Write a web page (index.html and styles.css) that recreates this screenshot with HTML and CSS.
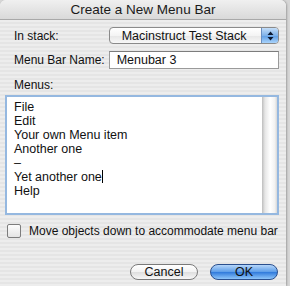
FILE: index.html
```html
<!DOCTYPE html>
<html lang="en">
<head>
    <meta charset="UTF-8">
    <title>Create a New Menu Bar</title>
    <link rel="stylesheet" href="styles.css">
</head>
<body>
    <div class="window">
        <div class="titlebar">Create a New Menu Bar</div>
        <div class="content">
            <div class="row stack-row">
                <span class="label">In stack:</span>
                <div class="popup">
                    <span class="popup-text">Macinstruct Test Stack</span>
                    <span class="popup-arrows">
                        <svg width="7" height="10" viewBox="0 0 7 10">
                            <path d="M3.5 0.5 L6.5 4 H0.5 Z M3.5 9.5 L6.5 6 H0.5 Z" fill="#0c1a33"/>
                        </svg>
                    </span>
                </div>
            </div>
            <div class="row name-row">
                <span class="label">Menu Bar Name:</span>
                <div class="field">Menubar 3</div>
            </div>
            <div class="menus-label">Menus:</div>
            <div class="menus-box">
                <div class="menus-text">
                    <div>File</div>
                    <div>Edit</div>
                    <div>Your own Menu item</div>
                    <div>Another one</div>
                    <div>–</div>
                    <div>Yet another one<span class="caret"></span></div>
                    <div>Help</div>
                </div>
                <div class="scroll-track"></div>
            </div>
            <label class="check-row">
                <span class="checkbox"></span>
                <span class="check-label">Move objects down to accommodate menu bar</span>
            </label>
            <div class="buttons">
                <button class="btn btn-cancel">Cancel</button>
                <button class="btn btn-ok">OK</button>
            </div>
        </div>
    </div>
</body>
</html>
```

FILE: styles.css
```css
body {
    margin: 0;
    width: 290px;
    height: 286px;
    overflow: hidden;
    background-color: #d6d6d6;
    font-family: 'Liberation Sans', Arial, sans-serif;
    font-size: 12px;
    color: #111;
}
.window {
    width: 286px;
    height: 286px;
    border-radius: 6px 6px 0 0;
    overflow: hidden;
    background: repeating-linear-gradient(#ededed 0, #ededed 2px, #e5e5e5 2px, #e5e5e5 4px);
    box-shadow: 1px 0 2px rgba(0, 0, 0, 0.25);
}
.titlebar {
    height: 19px;
    line-height: 19px;
    text-align: center;
    font-size: 13.5px;
    color: #1a1a1a;
    background: linear-gradient(#f0f0f0, #d9d9d9);
    border-bottom: 1px solid #a9a9a9;
}
.content {
    padding: 7px 7px 0 5px;
}
.row {
    display: flex;
    align-items: center;
}
.label {
    width: 95px;
    padding-left: 9px;
}
.popup {
    display: flex;
    align-items: center;
    width: 169px;
    height: 15px;
    border: 1px solid #8a8a8a;
    border-radius: 4px;
    background: linear-gradient(#ffffff, #f4f4f4 50%, #e6e6e6 51%, #f8f8f8);
    overflow: hidden;
}
.popup-text {
    flex: 1;
    padding-left: 12px;
    font-size: 12.5px;
}
.popup-arrows {
    width: 16px;
    height: 15px;
    display: flex;
    align-items: center;
    justify-content: center;
    border-left: 1px solid #6a8fc2;
    background: linear-gradient(#c3ddf8, #7fb2ea 50%, #5d9ce4 51%, #a9d3fb);
}
.name-row {
    margin-top: 7px;
}
.field {
    width: 162px;
    height: 16px;
    line-height: 16px;
    padding-left: 7px;
    font-size: 12.5px;
    background-color: #fff;
    border: 1px solid #9a9a9a;
    border-top-color: #7c7c7c;
}
.menus-label {
    margin-top: 9px;
    padding-left: 9px;
    height: 15px;
}
.menus-box {
    display: flex;
    width: 270px;
    height: 116px;
    margin-top: 2px;
    border: 2px solid #95b8e0;
    background-color: #fff;
}
.menus-text {
    flex: 1;
    padding: 3px 0 0 7px;
    line-height: 14px;
    font-size: 12.5px;
}
.caret {
    display: inline-block;
    width: 1px;
    height: 13px;
    background-color: #000;
    vertical-align: -2px;
}
.scroll-track {
    width: 15px;
    background: linear-gradient(to right, #bdbdbd, #e6e6e6 20%, #ffffff 55%, #f2f2f2 85%, #d7d7d7);
}
.check-row {
    display: flex;
    align-items: center;
    gap: 8px;
    margin-top: 9px;
    padding-left: 2px;
}
.check-label {
    font-size: 12px;
    white-space: nowrap;
}
.checkbox {
    width: 12px;
    height: 12px;
    flex-shrink: 0;
    border: 1px solid #7d7d7d;
    border-radius: 2px;
    background: linear-gradient(#fdfdfd, #e4e4e4);
}
.buttons {
    display: flex;
    justify-content: flex-end;
    gap: 12px;
    margin-top: 26px;
    padding-right: 1px;
}
.btn {
    width: 68px;
    height: 16px;
    padding: 0;
    border-radius: 8px;
    font-family: 'Liberation Sans', Arial, sans-serif;
    font-size: 12.5px;
    line-height: 14px;
    color: #111;
}
.btn-cancel {
    border: 1px solid #7a7a7a;
    background: linear-gradient(#ffffff, #f2f2f2 50%, #dedede 51%, #f7f7f7);
}
.btn-ok {
    border: 1px solid #2a4f8e;
    background: linear-gradient(#b5d6fa, #5b9ce8 50%, #2f79db 51%, #8ec5fa);
}
```
